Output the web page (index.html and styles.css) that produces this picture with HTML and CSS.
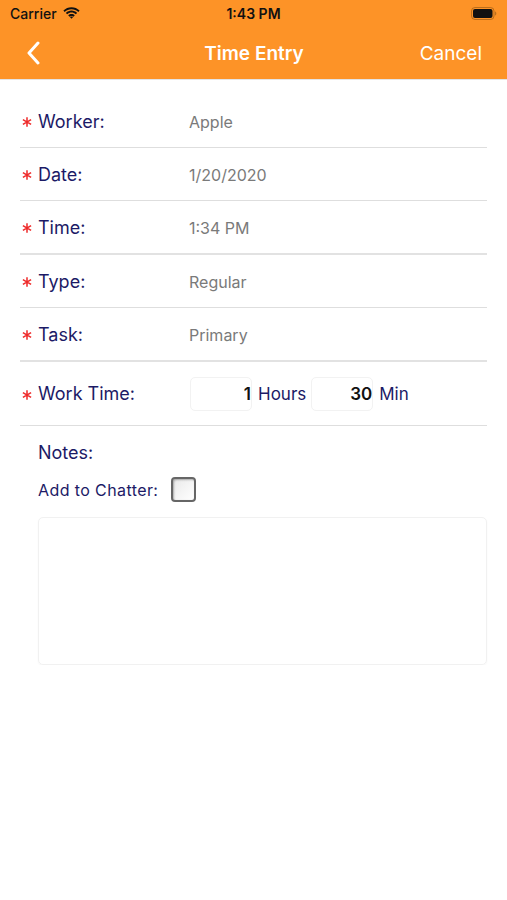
FILE: index.html
```html
<!DOCTYPE html>
<html lang="en">
<head>
  <meta charset="UTF-8" />
  <meta name="viewport" content="width=device-width, initial-scale=1.0"/>
  <title>Time Entry</title>
  <link rel="stylesheet" href="styles.css">
</head>
<body>
  <div class="header">
    <div class="status-bar">
      <div class="carrier">
        Carrier
        <svg class="wifi" width="17" height="12" viewBox="0 0 17 12">
          <path d="M8.5 2.2c2.6 0 5 1 6.8 2.7l1.3-1.4C14.4 1.4 11.6.2 8.5.2S2.6 1.4.4 3.5l1.3 1.4C3.5 3.2 5.9 2.2 8.5 2.2z" fill="#111"/>
          <path d="M8.5 5.6c1.6 0 3.1.6 4.3 1.7l1.3-1.4C12.6 4.5 10.6 3.6 8.5 3.6S4.4 4.5 2.9 5.9l1.3 1.4c1.2-1.1 2.7-1.7 4.3-1.7z" fill="#111"/>
          <path d="M8.5 8.9c.8 0 1.5.3 2 .8l1.3-1.4C11 7.5 9.8 7 8.5 7s-2.5.5-3.3 1.3l1.3 1.4c.5-.5 1.2-.8 2-.8z" fill="#111"/>
          <path d="M8.5 11.8l1.6-1.7c-.4-.4-1-.6-1.6-.6s-1.2.2-1.6.6z" fill="#111"/>
        </svg>
      </div>
      <div class="clock">1:43 PM</div>
      <div class="battery">
        <svg width="26" height="13" viewBox="0 0 26 13">
          <rect x="0.5" y="0.5" width="22.5" height="12" rx="3.5" fill="none" stroke="#7a4a10" stroke-opacity="0.5"/>
          <rect x="2" y="2" width="19.5" height="9" rx="2" fill="#111"/>
          <path d="M24 4.5v4c.8-.3 1.3-1.1 1.3-2s-.5-1.7-1.3-2z" fill="#7a4a10" fill-opacity="0.5"/>
        </svg>
      </div>
    </div>
    <div class="nav-bar">
      <div class="nav-side">
        <svg width="14" height="24" viewBox="0 0 14 24">
          <path d="M12 2L3 12l9 10" fill="none" stroke="#fff" stroke-width="3" stroke-linecap="round" stroke-linejoin="round"/>
        </svg>
      </div>
      <div class="nav-title">Time Entry</div>
      <div class="nav-side nav-cancel">Cancel</div>
    </div>
  </div>

  <div class="form">
    <div class="row">
      <span class="req"><svg width="10" height="10" viewBox="0 0 10 10"><path d="M5 0.3v9.4M0.9 2.65l8.2 4.7M0.9 7.35l8.2-4.7" stroke="#ee2a2a" stroke-width="1.5"/></svg></span>
      <span class="label">Worker:</span>
      <span class="value">Apple</span>
    </div>
    <div class="row">
      <span class="req"><svg width="10" height="10" viewBox="0 0 10 10"><path d="M5 0.3v9.4M0.9 2.65l8.2 4.7M0.9 7.35l8.2-4.7" stroke="#ee2a2a" stroke-width="1.5"/></svg></span>
      <span class="label">Date:</span>
      <span class="value">1/20/2020</span>
    </div>
    <div class="row thick">
      <span class="req"><svg width="10" height="10" viewBox="0 0 10 10"><path d="M5 0.3v9.4M0.9 2.65l8.2 4.7M0.9 7.35l8.2-4.7" stroke="#ee2a2a" stroke-width="1.5"/></svg></span>
      <span class="label">Time:</span>
      <span class="value">1:34 PM</span>
    </div>
    <div class="row">
      <span class="req"><svg width="10" height="10" viewBox="0 0 10 10"><path d="M5 0.3v9.4M0.9 2.65l8.2 4.7M0.9 7.35l8.2-4.7" stroke="#ee2a2a" stroke-width="1.5"/></svg></span>
      <span class="label">Type:</span>
      <span class="value">Regular</span>
    </div>
    <div class="row thick">
      <span class="req"><svg width="10" height="10" viewBox="0 0 10 10"><path d="M5 0.3v9.4M0.9 2.65l8.2 4.7M0.9 7.35l8.2-4.7" stroke="#ee2a2a" stroke-width="1.5"/></svg></span>
      <span class="label">Task:</span>
      <span class="value">Primary</span>
    </div>
    <div class="row work-row">
      <span class="req"><svg width="10" height="10" viewBox="0 0 10 10"><path d="M5 0.3v9.4M0.9 2.65l8.2 4.7M0.9 7.35l8.2-4.7" stroke="#ee2a2a" stroke-width="1.5"/></svg></span>
      <span class="label">Work Time:</span>
      <div class="work-time">
        <div class="num-box">1</div>
        <span class="unit">Hours</span>
        <div class="num-box">30</div>
        <span class="unit">Min</span>
      </div>
    </div>

    <div class="notes">
      <div class="notes-label">Notes:</div>
      <div class="chatter">
        <span>Add to Chatter:</span>
        <span class="checkbox"></span>
      </div>
      <div class="notes-box"></div>
    </div>
  </div>
</body>
</html>
```

FILE: styles.css
```css
body {
  margin: 0;
  font-family: Inter, "Liberation Sans", sans-serif;
  background: #fff;
}
.header {
  background-color: #fd9327;
  border-bottom: 1px solid #e4e4e4;
}
.status-bar {
  height: 27px;
  display: flex;
  align-items: center;
  justify-content: space-between;
  padding: 0 10px;
  font-size: 14px;
  color: #111;
}
.carrier {
  flex: 1;
  display: flex;
  align-items: center;
  gap: 6px;
  font-weight: 500;
}
.wifi {
  margin-top: -2px;
}
.clock {
  font-weight: 600;
}
.battery {
  flex: 1;
  display: flex;
  justify-content: flex-end;
}
.nav-bar {
  height: 52px;
  display: flex;
  align-items: center;
  justify-content: space-between;
  padding: 0 25px 0 26px;
  color: #fff;
}
.nav-side {
  width: 120px;
  display: flex;
  align-items: center;
}
.nav-title {
  font-size: 19px;
  font-weight: 600;
}
.nav-cancel {
  justify-content: flex-end;
  font-size: 19px;
}
.form {
  padding: 15px 20px 0;
}
.row {
  height: 52px;
  display: flex;
  align-items: center;
  border-bottom: 1px solid #dedede;
}
.row.thick {
  border-bottom: 2px solid #e2e2e2;
}
.req {
  width: 18px;
  display: flex;
  align-items: center;
  padding-left: 2px;
  padding-top: 2px;
  box-sizing: border-box;
}
.label {
  width: 151px;
  font-size: 18px;
  color: #1c1a66;
}
.value {
  font-size: 16px;
  color: #7a7a7a;
  padding-top: 1px;
}
.work-row {
  height: 63px;
}
.work-time {
  display: flex;
  align-items: center;
  gap: 5px;
  padding-left: 1px;
}
.num-box {
  width: 62px;
  height: 34px;
  box-sizing: border-box;
  border: 1px solid #f2f2f2;
  border-radius: 5px;
  display: flex;
  align-items: center;
  justify-content: flex-end;
  font-size: 17px;
  font-weight: 600;
  color: #111;
}
.unit {
  font-size: 17px;
  color: #1c1a66;
  margin-left: 1px;
}
.notes {
  padding-left: 18px;
}
.notes-label {
  font-size: 18px;
  color: #1c1a66;
  margin-top: 16px;
}
.chatter {
  display: flex;
  align-items: center;
  gap: 13px;
  margin-top: 14px;
  font-size: 16px;
  letter-spacing: 0.4px;
  color: #1c1a66;
}
.checkbox {
  width: 25px;
  height: 25px;
  box-sizing: border-box;
  border: 2px solid #666;
  border-radius: 4px;
  background: linear-gradient(135deg, #e9e9e9, #fff);
  box-shadow: inset 1px 1px 2px rgba(0,0,0,0.3);
}
.notes-box {
  margin-top: 15px;
  height: 146px;
  border: 1px solid #f1f1f1;
  border-radius: 5px;
  box-shadow: 0 1px 2px rgba(0,0,0,0.04);
}
```
